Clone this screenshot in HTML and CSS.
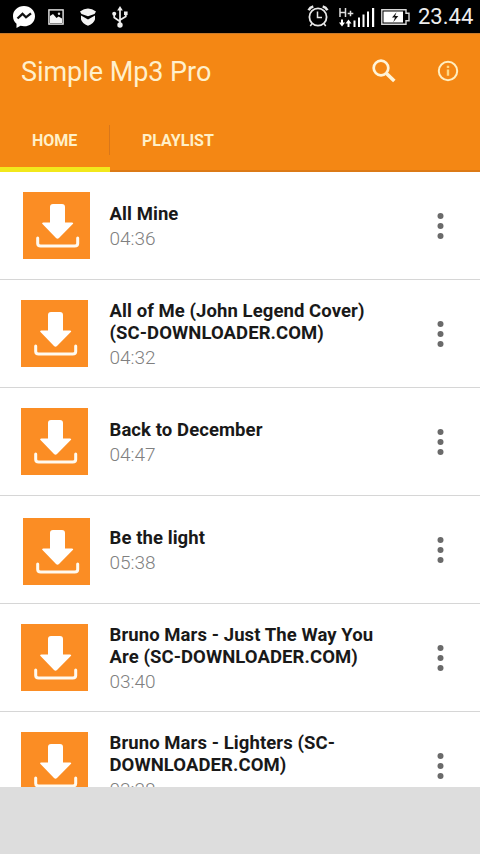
FILE: index.html
```html
<!DOCTYPE html>
<html lang="en">
<head>
<meta charset="utf-8">
<title>Simple Mp3 Pro</title>
<link rel="stylesheet" href="styles.css">
</head>
<body>
<svg class="symbols" width="0" height="0" aria-hidden="true">
  <symbol id="download" viewBox="-0.5 0 67 67">
    <path fill="#fff" d="M29.500 12h9q3 0 3 3v15.500H48.500q2 0 .8 1.500L35.500 46q-1.500 1.500-3 0L19 32q-1.200-1.500.8-1.500h6.700V15q0-3 3-3z"/>
    <path fill="none" stroke="#fffaf0" stroke-width="3" stroke-linecap="round" d="M14.200 46v5.500q0 2.500 3 2.500h34q3 0 3-2.500v-5.500"/>
  </symbol>
  <symbol id="more" viewBox="0 0 8 28">
    <g fill="#6a6a6a"><circle cx="4.500" cy="4" r="3"/><circle cx="4.500" cy="14" r="3"/><circle cx="4.500" cy="24" r="3"/></g>
  </symbol>
</svg>
<div class="status">
  <div class="status-left">
    <svg width="24" height="24" viewBox="0 0 24 24"><path fill="#fff" d="M12 1C5.700 1 1 5.300 1 11.200c0 3 1.300 5.700 3.500 7.500V23l4-2.200c1.100.3 2.300.5 3.500.5 6.300 0 11-4.400 11-10.100S18.300 1 12 1z"/><path fill="none" stroke="#111" stroke-width="2.300" d="M5.500 13.500l5-4.700 3.500 3.500 5-4"/></svg>
    <svg class="pic" width="16" height="16" viewBox="0 0 16 16"><rect x=".9" y=".9" width="14.200" height="14.200" fill="none" stroke="#e8e8e8" stroke-width="1.400"/><path fill="#f4f4f4" d="M2 14V7l3-2 3.500 4 2-1.500 3.500 2V14z"/><circle cx="11" cy="4.800" r="1.200" fill="#ddd"/></svg>
    <svg class="shield" width="16" height="18" viewBox="0 0 16 18"><path fill="#f4f4f4" d="M0 3.500Q4 .5 8 .5t8 3L14.500 6 8 8.300 1.500 6zM1 7.600l7 4 7-4v3.600Q14 15.500 8 17.800 2 15.500 1 11.200z"/></svg>
    <svg class="usb" width="16" height="22" viewBox="0 0 16 22"><g fill="none" stroke="#eee" stroke-width="1.700"><path d="M8 3v15M2.200 8v3.500L8 15.500M13.800 7v3.500L8 14"/></g><g fill="#eee"><path d="M8 0l2.800 4.500H5.200z"/><circle cx="8" cy="19" r="2.700"/><circle cx="2.200" cy="7.800" r="2"/><path d="M12 5.500h3.600v3.600H12z"/></g></svg>
  </div>
  <div class="status-right">
    <svg width="22" height="24" viewBox="0 0 22 24"><g fill="none" stroke="#e8e8e8"><circle cx="11" cy="13" r="8.600" stroke-width="1.800"/><path stroke-width="1.500" d="M10.500 7.500V13.500H15"/><path stroke-width="2.600" d="M1.600 6.200Q3 3.300 6.300 2.500M20.400 6.200Q19 3.300 15.700 2.500"/><path stroke-width="1.600" d="M5 19.500l-1.700 2.600M17 19.500l1.700 2.600"/></g></svg>
    <svg class="signal" width="38" height="22" viewBox="0 0 38 22"><g fill="none" stroke="#e0e0e0" stroke-width="1.500"><path d="M2 1v9M7.500 1v9M2 5.500h5.500M9.700 6.500h5.600M12.500 3.800v5.400"/></g><g fill="#fff"><path d="M3 12.500h2v3h2l-3 4-3-4h2zM9.500 20h2v-3.500h2l-3-4-3 4h2z"/><path d="M15.500 13.500h2V20h-2zM20 10.500h2V20h-2zM24.500 7.500h2V20h-2zM29 4.500h2V20h-2zM34 1h2.200v19H34z"/></g></svg>
    <svg class="battery" width="29" height="16" viewBox="0 0 29 16"><path fill="none" stroke="#d8d8d8" stroke-width="1.400" d="M.8.800H25v3.400h3v7.600h-3v3.400H.8z"/><path fill="#fff" d="M2.500 2.500h19.500v11H2.500z"/><path fill="#111" d="M15.500 3.200l-4.500 5.400h3l-1.800 4.600L17.300 7h-3.200z"/></svg>
    <span class="clock">23.44</span>
  </div>
</div>
<header class="app">
  <div class="bar">
    <h1>Simple Mp3 Pro</h1>
    <svg class="search" width="26" height="26" viewBox="0 0 26 26"><g fill="none" stroke="#fff4d8"><circle cx="10" cy="10" r="7.300" stroke-width="2.700"/><path stroke-width="3.600" d="M15.500 15.500l7.800 7.500"/></g></svg>
    <svg class="info" width="22" height="22" viewBox="0 0 22 22"><circle cx="11" cy="11" r="9.200" fill="none" stroke="#ffeec0" stroke-width="2"/><path fill="#ffd883" d="M9.800 5.700h2.400V8H9.800zM9.800 9.500h2.400v6.300H9.800z"/></svg>
  </div>
  <nav class="tabs"><div class="tab active">HOME</div><div class="tab second">PLAYLIST</div></nav>
</header>
<main class="list">
  <div class="row"><svg class="art shifted"><use href="#download"/></svg><div class="text"><div class="name">All Mine</div><div class="time">04:36</div></div><svg class="more"><use href="#more"/></svg></div>
  <div class="row"><svg class="art"><use href="#download"/></svg><div class="text"><div class="name">All of Me (John Legend Cover)<br>(SC-DOWNLOADER.COM)</div><div class="time">04:32</div></div><svg class="more"><use href="#more"/></svg></div>
  <div class="row"><svg class="art"><use href="#download"/></svg><div class="text"><div class="name">Back to December</div><div class="time">04:47</div></div><svg class="more"><use href="#more"/></svg></div>
  <div class="row"><svg class="art shifted lowered"><use href="#download"/></svg><div class="text"><div class="name">Be the light</div><div class="time">05:38</div></div><svg class="more"><use href="#more"/></svg></div>
  <div class="row"><svg class="art"><use href="#download"/></svg><div class="text"><div class="name">Bruno Mars - Just The Way You<br>Are (SC-DOWNLOADER.COM)</div><div class="time">03:40</div></div><svg class="more"><use href="#more"/></svg></div>
  <div class="row"><svg class="art"><use href="#download"/></svg><div class="text"><div class="name">Bruno Mars - Lighters (SC-<br>DOWNLOADER.COM)</div><div class="time">03:38</div></div><svg class="more"><use href="#more"/></svg></div>
</main>
<footer class="ad"></footer>
</body>
</html>
```
FILE: styles.css
```css
* { box-sizing: border-box; }
body {
  margin: 0;
  width: 480px;
  height: 854px;
  display: flex;
  flex-direction: column;
  overflow: hidden;
  background: #fff;
  font-family: Roboto, "Liberation Sans", sans-serif;
}
svg { display: block; flex: none; }
.symbols { display: none; }
.status {
  height: 33px;
  flex: none;
  display: flex;
  justify-content: space-between;
  background: #000;
}
.status-left, .status-right { display: flex; align-items: flex-start; }
.status-left { padding: 5px 0 0 12px; }
.pic { margin: 4px 0 0 12px; }
.shield { margin: 3px 0 0 16px; }
.usb { margin: 1px 0 0 16px; }
.status-right { padding: 4px 8px 0 0; }
.signal { margin: 3px 0 0 9px; }
.battery { margin: 5px 0 0 5px; }
.clock {
  width: 54px;
  margin-left: 8px;
  font-size: 22px;
  line-height: 26px;
  color: #eee;
  white-space: nowrap;
}
.app {
  height: 139px;
  flex: none;
  background: #f48714;
  border-top: 1px solid #c77a2c;
}
.bar { height: 75px; display: flex; align-items: center; padding: 0 21px 2px 21px; }
h1 {
  flex: 1;
  margin: 3px 0 0;
  font-size: 27px;
  line-height: 32px;
  font-weight: 400;
  letter-spacing: -0.05px;
  color: #fff0cc;
}
.search { margin-right: 40px; }
.tabs { height: 63px; display: flex; border-bottom: 2px solid #dc7a16; }
.tab {
  height: 63px;
  display: flex;
  align-items: center;
  padding: 0 32px;
  font-size: 16px;
  font-weight: 700;
  color: #fff0c8;
}
.active {
  width: 110px;
  border-bottom: 5px solid #f2e81c;
  padding-top: 4px;
  background: linear-gradient(#d9771a, #d9771a) 109px 16px / 1px 30px no-repeat;
}
.second { padding-bottom: 1px; }
.list { height: 615px; flex: none; overflow: hidden; }
.row {
  height: 108px;
  display: flex;
  align-items: center;
  padding: 0 36px 0 21px;
  border-bottom: 1px solid #d6d6d6;
}
.art { width: 67px; height: 67px; margin-right: 21.500px; background: #fb8d24; }
.shifted { margin-left: 2px; margin-right: 19.500px; }
.lowered { margin-top: 3px; }
.text { flex: 1; padding-top: 4px; white-space: nowrap; }
.name { font-size: 18.500px; line-height: 22px; font-weight: 700; letter-spacing: 0.08px; color: #191919; }
.time { font-size: 19px; line-height: 28px; font-weight: 300; color: #808080; }
.more { width: 8px; height: 28px; }
.ad { flex: 1; background: #ddd; }
```
